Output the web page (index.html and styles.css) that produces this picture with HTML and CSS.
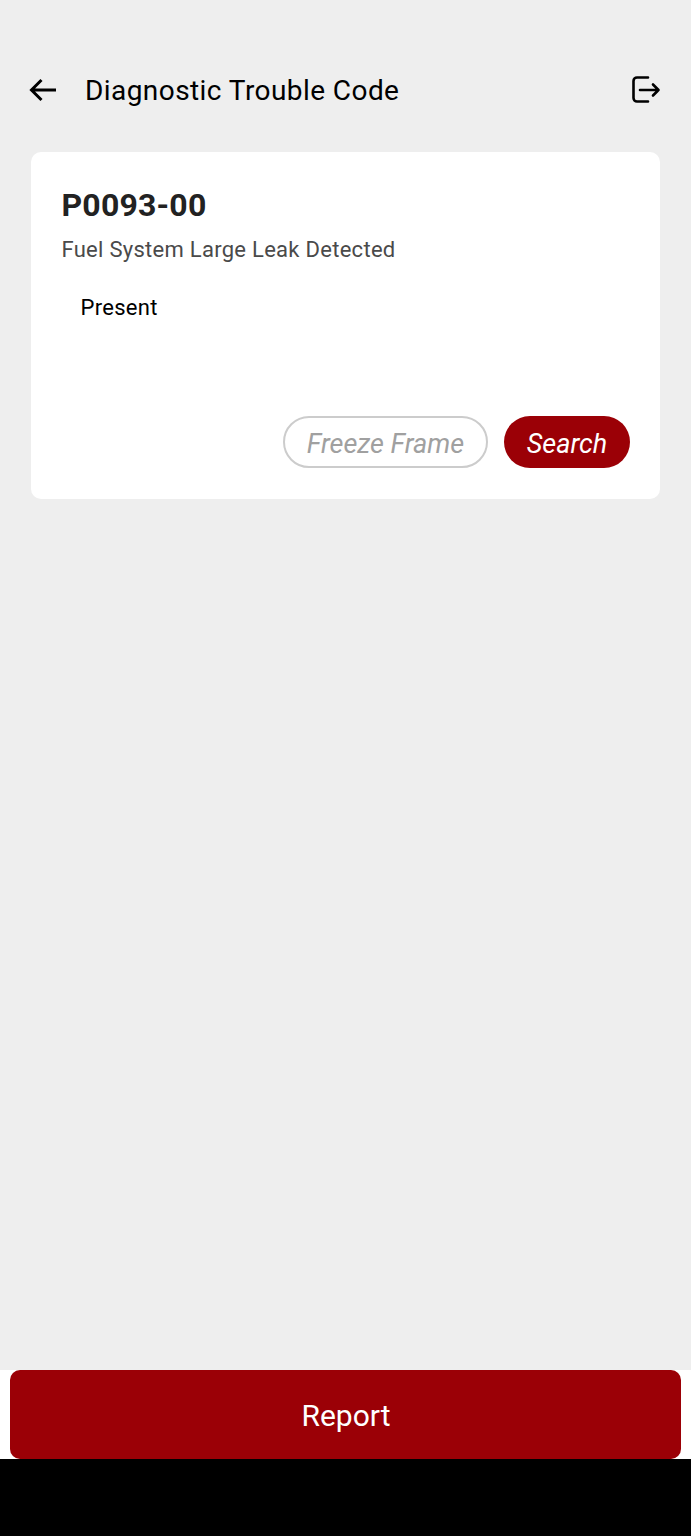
FILE: index.html
```html
<!DOCTYPE html>
<html lang="en">
<head>
    <meta charset="UTF-8">
    <meta name="viewport" content="width=device-width, initial-scale=1.0">
    <title>Diagnostic Trouble Code</title>
    <link rel="stylesheet" href="styles.css">
</head>
<body>
    <div class="screen">
        <div class="header">
            <svg class="back-icon" width="30" height="24" viewBox="0 0 30 24">
                <path d="M28 12H3.5M13.5 2L3.5 12l10 10" fill="none" stroke="#000" stroke-width="3"/>
            </svg>
            <h1>Diagnostic Trouble Code</h1>
            <svg class="exit-icon" width="30" height="30" viewBox="0 0 30 30">
                <path d="M17 2.5H6a3.5 3.5 0 0 0-3.5 3.5v17a3.5 3.5 0 0 0 3.5 3.5H17" fill="none" stroke="#000" stroke-width="2.6" stroke-linecap="round"/>
                <path d="M9 15h18.5M22 9.5l5.5 5.5-5.5 5.5" fill="none" stroke="#000" stroke-width="2.6" stroke-linecap="round" stroke-linejoin="round"/>
            </svg>
        </div>

        <div class="content">
            <div class="code-card">
                <div class="code-title">P0093-00</div>
                <div class="code-desc">Fuel System Large Leak Detected</div>
                <div class="code-status">Present</div>
                <div class="code-actions">
                    <button class="btn-outline">Freeze Frame</button>
                    <button class="btn-solid">Search</button>
                </div>
            </div>
        </div>

        <div class="footer">
            <button class="btn-report">Report</button>
        </div>
        <div class="nav-bar"></div>
    </div>
</body>
</html>
```

FILE: styles.css
```css
html, body {
    margin: 0;
    padding: 0;
}
body {
    font-family: Roboto, "Liberation Sans", sans-serif;
    background-color: #000;
}
.screen {
    display: flex;
    flex-direction: column;
    height: 1536px;
    background-color: #eeeeee;
}
.header {
    display: flex;
    align-items: center;
    height: 56px;
    margin-top: 62px;
    padding: 0 30px 0 28px;
}
.header h1 {
    flex-grow: 1;
    margin: 0 0 0 27px;
    font-size: 28px;
    font-weight: 400;
    letter-spacing: 0.43px;
    color: #000;
}
.back-icon, .exit-icon {
    flex-shrink: 0;
}
.content {
    flex-grow: 1;
    padding: 34px 31px 0 30.5px;
}
.code-card {
    background-color: #fff;
    border-radius: 10px;
    height: 346.5px;
    padding: 0 30px 30.5px 31px;
    box-sizing: border-box;
    display: flex;
    flex-direction: column;
}
.code-title {
    margin-top: 33px;
    font-size: 32px;
    line-height: 40px;
    font-weight: 700;
    letter-spacing: 0.2px;
    color: #222;
}
.code-desc {
    margin-top: 11px;
    font-size: 22px;
    line-height: 28px;
    letter-spacing: 0.28px;
    color: #4a4a4a;
}
.code-status {
    margin-top: 29px;
    padding-left: 19px;
    font-size: 22px;
    line-height: 30px;
    letter-spacing: 0.3px;
    color: #000;
}
.code-actions {
    margin-top: auto;
    display: flex;
    justify-content: flex-end;
    gap: 16px;
}
.code-actions button {
    height: 52px;
    border-radius: 26px;
    font-family: inherit;
    font-size: 27px;
    font-style: italic;
    padding: 3px 0 0;
    box-sizing: border-box;
}
.btn-outline {
    width: 205px;
    background-color: #fff;
    border: 2px solid #cccccc;
    color: #a0a0a0;
}
.btn-solid {
    width: 126px;
    background-color: #9b0006;
    border: none;
    color: #fff;
}
.footer {
    height: 89px;
    background-color: #fff;
    padding: 0 10px;
}
.btn-report {
    display: block;
    width: 100%;
    height: 89px;
    padding: 2px 0 0 1px;
    background-color: #9b0006;
    border: none;
    border-radius: 10px;
    color: #fff;
    font-family: inherit;
    font-size: 30px;
}
.nav-bar {
    height: 77px;
    background-color: #000;
}
```
